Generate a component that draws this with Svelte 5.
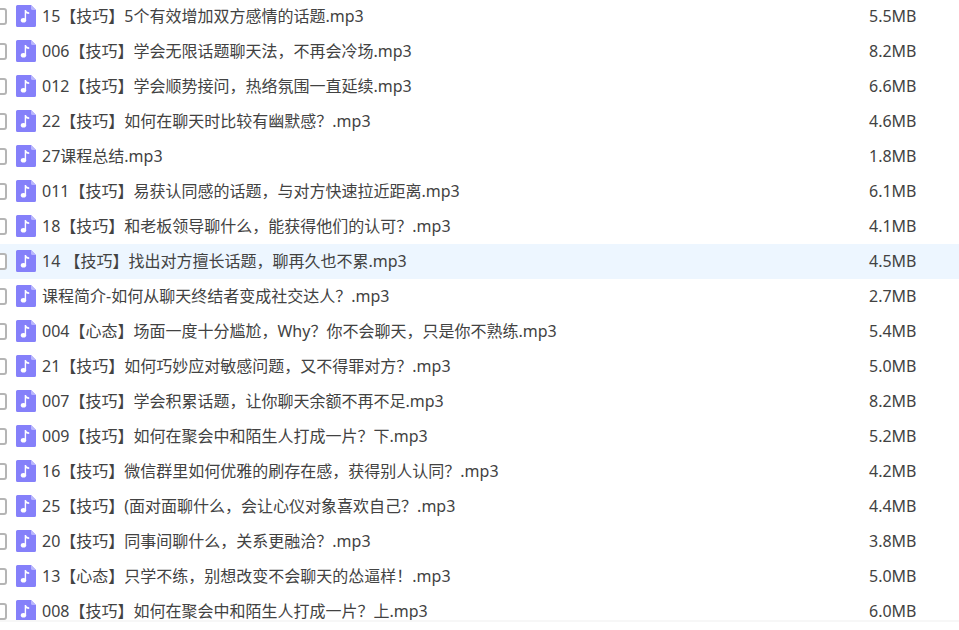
<script>
	let files = [
		{ name: '15【技巧】5个有效增加双方感情的话题.mp3', size: '5.5MB' },
		{ name: '006【技巧】学会无限话题聊天法，不再会冷场.mp3', size: '8.2MB' },
		{ name: '012【技巧】学会顺势接问，热络氛围一直延续.mp3', size: '6.6MB' },
		{ name: '22【技巧】如何在聊天时比较有幽默感？.mp3', size: '4.6MB' },
		{ name: '27课程总结.mp3', size: '1.8MB' },
		{ name: '011【技巧】易获认同感的话题，与对方快速拉近距离.mp3', size: '6.1MB' },
		{ name: '18【技巧】和老板领导聊什么，能获得他们的认可？.mp3', size: '4.1MB' },
		{ name: '14 【技巧】找出对方擅长话题，聊再久也不累.mp3', size: '4.5MB', active: true },
		{ name: '课程简介-如何从聊天终结者变成社交达人？.mp3', size: '2.7MB' },
		{ name: '004【心态】场面一度十分尴尬，Why？你不会聊天，只是你不熟练.mp3', size: '5.4MB' },
		{ name: '21【技巧】如何巧妙应对敏感问题，又不得罪对方？.mp3', size: '5.0MB' },
		{ name: '007【技巧】学会积累话题，让你聊天余额不再不足.mp3', size: '8.2MB' },
		{ name: '009【技巧】如何在聚会中和陌生人打成一片？下.mp3', size: '5.2MB' },
		{ name: '16【技巧】微信群里如何优雅的刷存在感，获得别人认同？.mp3', size: '4.2MB' },
		{ name: '25【技巧】(面对面聊什么，会让心仪对象喜欢自己？.mp3', size: '4.4MB' },
		{ name: '20【技巧】同事间聊什么，关系更融洽？.mp3', size: '3.8MB' },
		{ name: '13【心态】只学不练，别想改变不会聊天的怂逼样！.mp3', size: '5.0MB' },
		{ name: '008【技巧】如何在聚会中和陌生人打成一片？上.mp3', size: '6.0MB' }
	];
</script>

<div class="page">
	<div class="list">
		<table>
			<tbody>
				{#each files as file, i}
					<tr class:active={file.active}>
						<td class="check"><input type="checkbox" id="file-{i}" /></td>
						<td class="name">
							<label for="file-{i}">
								<svg class="icon" viewBox="0 0 20 22" aria-hidden="true">
									<path d="M1.500 0H15l5 5v15.500a1.500 1.500 0 0 1-1.500 1.500h-17A1.500 1.500 0 0 1 0 20.500v-19A1.500 1.500 0 0 1 1.500 0z" fill="#8580fa" />
									<path d="M15 0l5 5h-3.500A1.500 1.500 0 0 1 15 3.500z" fill="#b9b6fd" />
									<ellipse cx="7.500" cy="15.300" rx="2.700" ry="2.300" fill="#fff" />
									<path d="M8.700 5h1.400c.2 1.400 1.100 2 3.100 2.200v1.700c-1.400 0-2.400-.2-3.100-.7v7.100H8.700z" fill="#fff" />
								</svg>
								<span>{file.name}</span>
							</label>
						</td>
						<td class="size">{file.size}</td>
					</tr>
				{/each}
			</tbody>
		</table>
	</div>
</div>

<style>
	:global(body) {
		margin: 0;
		background: #fff;
	}
	.page {
		display: flex;
		flex-direction: column;
		box-sizing: border-box;
		height: 100vh;
		padding-bottom: 8px;
		overflow: hidden;
		font-family: 'Noto Sans', 'Noto Sans CJK SC', sans-serif;
		font-size: 16px;
		color: #424242;
	}
	.list {
		flex: 1;
		min-height: 0;
		overflow: hidden;
		border-bottom: 2px solid #f7f7f7;
	}
	table {
		width: 100%;
		margin-top: -1px;
		table-layout: fixed;
		border-collapse: collapse;
	}
	td {
		box-sizing: border-box;
		height: 35px;
		padding: 0 0 2px;
		line-height: 24px;
		white-space: nowrap;
	}
	.active {
		background: #edf6ff;
	}
	.check {
		width: 16px;
		padding: 0;
	}
	input {
		display: block;
		appearance: none;
		box-sizing: border-box;
		width: 16px;
		height: 17px;
		margin: 0 0 0 -9px;
		border: 2px solid #b5b5b5;
		border-radius: 3px;
		background: #fff;
	}
	input:checked {
		background: #8580fa;
	}
	label {
		display: flex;
		align-items: center;
		gap: 6px;
	}
	.icon {
		flex: none;
		width: 20px;
		height: 22px;
	}
	.size {
		width: 90px;
	}
</style>
